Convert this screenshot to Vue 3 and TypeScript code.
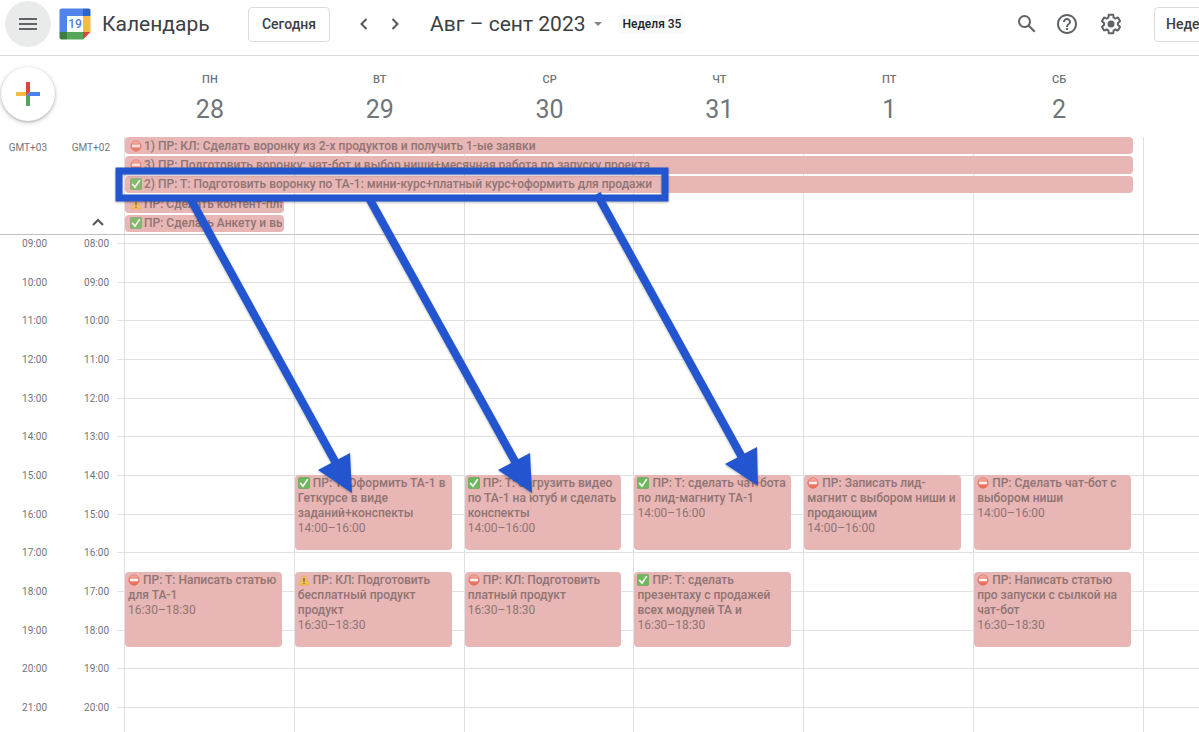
<script setup lang="ts">
type Mark = 'stop' | 'done' | 'warn'

interface AllDayEvent {
  mark: Mark
  title: string
  span: number
}

interface TimedEvent {
  mark: Mark
  title: string
  time: string
  day: number
  start: number
}

const days = [
  { name: 'ПН', date: 28 },
  { name: 'ВТ', date: 29 },
  { name: 'СР', date: 30 },
  { name: 'ЧТ', date: 31 },
  { name: 'ПТ', date: 1 },
  { name: 'СБ', date: 2 },
]

const allDay: AllDayEvent[] = [
  { mark: 'stop', title: '1) ПР: КЛ: Сделать воронку из 2-х продуктов и получить 1-ые заявки', span: 6 },
  { mark: 'stop', title: '3) ПР: Подготовить воронку: чат-бот и выбор ниши+месячная работа по запуску проекта', span: 6 },
  { mark: 'done', title: '2) ПР: Т: Подготовить воронку по ТА-1: мини-курс+платный курс+оформить для продажи', span: 6 },
  { mark: 'warn', title: 'ПР: Сделать контент-пла', span: 1 },
  { mark: 'done', title: 'ПР: Сделать Анкету и вы', span: 1 },
]

const firstHour = 8
const hours = Array.from({ length: 13 }, (_, i) => firstHour + i)
const clock = (h: number): string => `${String(h).padStart(2, '0')}:00`

const events: TimedEvent[] = [
  { mark: 'stop', title: 'ПР: Т: Написать статью\nдля ТА-1', time: '16:30–18:30', day: 0, start: 16.5 },
  { mark: 'done', title: 'ПР: Т: Оформить ТА-1 в\nГеткурсе в виде\nзаданий+конспекты', time: '14:00–16:00', day: 1, start: 14 },
  { mark: 'warn', title: 'ПР: КЛ: Подготовить\nбесплатный продукт\nпродукт', time: '16:30–18:30', day: 1, start: 16.5 },
  { mark: 'done', title: 'ПР: Т: Загрузить видео\nпо ТА-1 на ютуб и сделать\nконспекты', time: '14:00–16:00', day: 2, start: 14 },
  { mark: 'stop', title: 'ПР: КЛ: Подготовить\nплатный продукт', time: '16:30–18:30', day: 2, start: 16.5 },
  { mark: 'done', title: 'ПР: Т: сделать чат-бота\nпо лид-магниту ТА-1', time: '14:00–16:00', day: 3, start: 14 },
  { mark: 'done', title: 'ПР: Т: сделать\nпрезентаху с продажей\nвсех модулей ТА и', time: '16:30–18:30', day: 3, start: 16.5 },
  { mark: 'stop', title: 'ПР: Записать лид-\nмагнит с выбором ниши и\nпродающим', time: '14:00–16:00', day: 4, start: 14 },
  { mark: 'stop', title: 'ПР: Сделать чат-бот с\nвыбором ниши', time: '14:00–16:00', day: 5, start: 14 },
  { mark: 'stop', title: 'ПР: Написать статью\nпро запуски с сылкой на\nчат-бот', time: '16:30–18:30', day: 5, start: 16.5 },
]

// Two rows per hour; row 1 is the strip above the first hour line.
const rowOf = (hour: number): number => (hour - firstHour) * 2 + 2

const arrows = [
  { line: 'M190 198L337 465', head: '352,493 318,470 350,453' },
  { line: 'M369 198L517 465', head: '532,493 498,470 530,453' },
  { line: 'M597 194L743 459', head: '758,486 725,464 757,447' },
]
</script>

<template>
  <div class="page">
    <svg class="defs" width="0" height="0" aria-hidden="true">
      <defs>
        <linearGradient id="bar-shine" x1="0" y1="0" x2="0" y2="1">
          <stop offset="0" stop-color="#f4b9ae" />
          <stop offset="0.45" stop-color="#ea8272" />
          <stop offset="1" stop-color="#ea6a55" />
        </linearGradient>
      </defs>
      <symbol id="mark-stop" viewBox="0 0 12 12">
        <circle cx="6" cy="6" r="5.2" fill="url(#bar-shine)" stroke="#e5715f" stroke-width="0.8" />
        <rect x="2" y="4.8" width="8" height="2.4" rx="0.5" fill="#fbf0ef" />
      </symbol>
      <symbol id="mark-done" viewBox="0 0 12 12">
        <rect x="0.4" y="0.4" width="11.2" height="11.2" rx="1.4" fill="#6bb95c" stroke="#5a9f50" stroke-width="0.6" />
        <path d="M2.6 6.4L5 9.2L9.4 2.6" fill="none" stroke="#fff" stroke-width="1.7" stroke-linecap="round" />
      </symbol>
      <symbol id="mark-warn" viewBox="0 0 12 12">
        <path d="M6 1L11.4 11H0.6Z" fill="#f3c04f" stroke="#e9b04a" stroke-width="0.8" stroke-linejoin="round" />
        <path d="M6 4V7.8M6 8.8V10" stroke="#6f5340" stroke-width="1.2" />
      </symbol>
    </svg>

    <header class="topbar">
      <button class="menu" aria-label="Главное меню">
        <svg width="24" height="24" viewBox="0 0 24 24"><path d="M3 18h18v-2H3v2zm0-5h18v-2H3v2zm0-7v2h18V6H3z" fill="#5f6368" /></svg>
      </button>
      <a class="brand" href="#">
        <svg width="32" height="32" viewBox="0 0 32 32" aria-hidden="true">
          <path d="M2.5 0.5H24V8H8V24H0.5V2.5a2 2 0 0 1 2-2Z" fill="#5083ec" />
          <path d="M24 0.5h5.500a2 2 0 0 1 2 2V8H24Z" fill="#2f63c9" />
          <path d="M24 8h7.500v16H24Z" fill="#f2bd42" />
          <path d="M8 24h16v7.500H8Z" fill="#57a55a" />
          <path d="M0.500 24H8v7.500H2.500a2 2 0 0 1-2-2Z" fill="#3b7f40" />
          <path d="M24 24h7.500L24 31.500Z" fill="#dc4437" />
          <rect x="8" y="8" width="16" height="16" fill="#fff" />
          <text x="16" y="20" text-anchor="middle" class="logo-day">19</text>
        </svg>
        <span>Календарь</span>
      </a>
      <button class="outlined today">Сегодня</button>
      <button class="arrow" aria-label="Предыдущая неделя">
        <svg width="20" height="20" viewBox="0 0 20 20"><path d="M12.500 5L7.500 10L12.500 15" class="stroke" /></svg>
      </button>
      <button class="arrow" aria-label="Следующая неделя">
        <svg width="20" height="20" viewBox="0 0 20 20"><path d="M7.500 5L12.500 10L7.500 15" class="stroke" /></svg>
      </button>
      <button class="period">
        Авг – сент 2023
        <svg width="8" height="4" viewBox="0 0 8 4" aria-hidden="true"><path d="M0 0h8L4 4Z" fill="#80868b" /></svg>
      </button>
      <span class="week">Неделя 35</span>
      <div class="tools">
        <button class="tool" aria-label="Поиск">
          <svg width="24" height="24" viewBox="0 0 24 24"><path fill="#5f6368" d="M20.490 19l-5.730-5.730C15.530 12.200 16 10.910 16 9.500A6.500 6.500 0 1 0 9.500 16c1.410 0 2.700-.470 3.770-1.240L19 20.490 20.490 19zM5 9.500C5 7.010 7.010 5 9.500 5S14 7.010 14 9.500 11.990 14 9.500 14 5 11.990 5 9.500z" /></svg>
        </button>
        <button class="tool" aria-label="Справка">
          <svg width="24" height="24" viewBox="0 0 24 24"><path fill="#5f6368" d="M11 18h2v-2h-2v2zm1-16C6.480 2 2 6.480 2 12s4.480 10 10 10 10-4.480 10-10S17.520 2 12 2zm0 18c-4.410 0-8-3.590-8-8s3.590-8 8-8 8 3.590 8 8-3.590 8-8 8zm0-14c-2.210 0-4 1.790-4 4h2c0-1.100.900-2 2-2s2 .900 2 2c0 2-3 1.750-3 5h2c0-2.250 3-2.500 3-5 0-2.210-1.790-4-4-4z" /></svg>
        </button>
        <button class="tool settings" aria-label="Настройки">
          <svg width="24" height="24" viewBox="0 0 24 24">
            <path fill="#5f6368" d="M13.85 22.25h-3.7c-.74 0-1.36-.54-1.45-1.27l-.27-1.89c-.27-.14-.53-.29-.79-.46l-1.8.72c-.7.26-1.47-.03-1.81-.65L2.2 15.53c-.35-.66-.2-1.44.36-1.88l1.53-1.19c-.01-.15-.02-.3-.02-.46 0-.15.01-.31.02-.46l-1.52-1.19c-.59-.45-.74-1.26-.37-1.88l1.85-3.19c.34-.62 1.11-.9 1.79-.63l1.81.73c.26-.17.52-.32.78-.46l.27-1.91c.09-.7.71-1.25 1.44-1.25h3.7c.74 0 1.36.54 1.45 1.27l.27 1.89c.27.14.53.29.79.46l1.8-.72c.71-.26 1.48.03 1.82.65l1.84 3.18c.36.66.2 1.44-.36 1.88l-1.52 1.19c.01.15.02.3.02.46s-.01.31-.02.46l1.52 1.19c.56.45.72 1.23.37 1.86l-1.86 3.22c-.34.62-1.11.9-1.8.63l-1.8-.72c-.26.17-.52.32-.78.46l-.27 1.91c-.1.68-.72 1.22-1.46 1.22zm-3.23-2h2.76l.37-2.55.53-.22c.44-.18.88-.44 1.34-.78l.45-.34 2.38.96 1.38-2.4-2.03-1.58.07-.56c.03-.26.06-.51.06-.78s-.03-.53-.06-.78l-.07-.56 2.03-1.58-1.39-2.4-2.39.96-.45-.35c-.42-.32-.87-.58-1.33-.77l-.52-.22-.37-2.55h-2.76l-.37 2.55-.53.21c-.44.19-.88.44-1.34.79l-.45.33-2.38-.95-1.39 2.39 2.03 1.58-.07.56a7 7 0 0 0-.06.79c0 .26.02.53.06.78l.07.56-2.03 1.58 1.38 2.4 2.39-.96.45.35c.43.33.86.58 1.33.77l.53.22.38 2.55z" />
            <circle cx="12" cy="12" r="3.5" fill="#5f6368" />
          </svg>
        </button>
      </div>
      <div class="view"><button class="outlined">Неделя</button></div>
    </header>

    <main class="calendar">
      <section class="week-head">
        <div class="create-cell">
          <button class="create" aria-label="Создать">
            <svg width="24" height="24" viewBox="0 0 24 24">
              <path d="M10 0h4v10l-4 4Z" fill="#dc4437" />
              <path d="M0 10h10v4H0Z" fill="#f2bd42" />
              <path d="M14 10h10v4H10Z" fill="#4a80ee" />
              <path d="M10 14h4v10h-4Z" fill="#57a55a" />
            </svg>
          </button>
        </div>
        <div v-for="d in days" :key="d.name" class="day">
          <span class="day-name">{{ d.name }}</span>
          <span class="day-date">{{ d.date }}</span>
        </div>
      </section>

      <section class="all-day">
        <div class="zones">
          <span>GMT+03</span>
          <span>GMT+02</span>
          <button class="collapse" aria-label="Свернуть">
            <svg width="12" height="8" viewBox="0 0 12 8"><path d="M1 7L6 2L11 7" class="stroke" /></svg>
          </button>
        </div>
        <div class="all-day-grid">
          <i v-for="n in 7" :key="n" class="divider" :style="{ gridColumn: n }" />
          <div
            v-for="(e, i) in allDay"
            :key="i"
            class="chip"
            :style="{ gridColumn: `1 / span ${e.span}`, gridRow: i + 1 }"
          >
            <svg class="mark"><use :href="`#mark-${e.mark}`" /></svg>
            <span>{{ e.title }}</span>
          </div>
        </div>
      </section>

      <section class="schedule">
        <template v-for="h in hours" :key="h">
          <span class="hour" :style="{ gridColumn: 1, gridRow: rowOf(h) }">{{ clock(h + 1) }}</span>
          <span class="hour" :style="{ gridColumn: 2, gridRow: rowOf(h) }">{{ clock(h) }}</span>
          <i class="rule" :style="{ gridRow: rowOf(h) }" />
        </template>
        <i v-for="n in 7" :key="n" class="divider tall" :style="{ gridColumn: n + 3 }" />
        <article
          v-for="(e, i) in events"
          :key="i"
          class="event"
          :style="{ gridColumn: e.day + 4, gridRow: `${rowOf(e.start)} / span 4` }"
        >
          <svg class="mark"><use :href="`#mark-${e.mark}`" /></svg>
          <strong>{{ e.title }}</strong>
          <time>{{ e.time }}</time>
        </article>
      </section>
    </main>

    <svg class="notes" aria-hidden="true">
      <g>
        <rect x="119" y="171" width="546" height="27" fill="none" stroke="#2255cf" stroke-width="7" />
        <template v-for="a in arrows" :key="a.line">
          <path :d="a.line" stroke="#2255cf" stroke-width="8" />
          <polygon :points="a.head" fill="#2255cf" />
        </template>
      </g>
    </svg>
  </div>
</template>

<style>
body {
  margin: 0;
  background: #fff;
}
</style>

<style scoped>
.page {
  position: relative;
  display: flex;
  flex-direction: column;
  min-height: 100vh;
  overflow: hidden;
  background: #fff;
  color: #3c4043;
  font-family: Roboto, "Noto Sans", sans-serif;
}

.defs,
.notes {
  position: absolute;
  top: 0;
  left: 0;
}

.notes {
  width: 100%;
  height: 100%;
  pointer-events: none;
}

.notes g {
  filter: drop-shadow(0 1px 1px rgba(0, 0, 0, 0.3));
}

button {
  padding: 0;
  border: 0;
  background: none;
  color: inherit;
  font-family: inherit;
  cursor: pointer;
}

svg {
  display: block;
  flex: none;
}

.stroke {
  fill: none;
  stroke: #54585d;
  stroke-width: 2;
}

.topbar {
  display: flex;
  align-items: center;
  box-sizing: border-box;
  height: 56px;
  padding-bottom: 7px;
  border-bottom: 1px solid #dadce0;
}

.menu {
  display: grid;
  place-items: center;
  flex: none;
  width: 46px;
  height: 46px;
  margin-left: 5px;
  border-radius: 50%;
  background: #e9ebea;
}

.brand {
  display: flex;
  align-items: center;
  gap: 11px;
  width: 189px;
  margin-left: 8px;
  color: #3c4043;
  font-size: 21px;
  text-decoration: none;
  white-space: nowrap;
}

.logo-day {
  fill: #4a7de8;
  font-size: 12px;
  font-weight: 500;
}

.outlined {
  height: 35px;
  padding: 0 11px;
  border: 1px solid #dadce0;
  border-radius: 4px;
  font-size: 14px;
  font-weight: 500;
}

.today {
  width: 82px;
  margin-right: 18px;
}

.arrow {
  display: grid;
  place-items: center;
  width: 31px;
  height: 31px;
}

.period {
  display: flex;
  align-items: center;
  gap: 9px;
  margin-left: 20px;
  font-size: 21px;
  white-space: nowrap;
}

.week {
  margin-left: 16px;
  padding: 0 4px;
  border-radius: 4px;
  background: #f8f9fa;
  color: #202124;
  font-size: 12px;
  font-weight: 500;
  line-height: 19px;
  white-space: nowrap;
}

.tools {
  display: flex;
  gap: 16px;
  margin-left: auto;
}

.settings {
  margin-left: 4px;
}

.view {
  width: 45px;
  margin-left: 31px;
  overflow: hidden;
}

.calendar {
  display: flex;
  flex: 1;
  flex-direction: column;
}

.week-head {
  display: grid;
  grid-template-columns: 125px repeat(6, 1fr) 55px;
  height: 81px;
}

.create-cell {
  padding: 11px 1px;
}

.create {
  display: grid;
  place-items: center;
  width: 54px;
  height: 54px;
  border-radius: 50%;
  background: #fff;
  box-shadow: 0 1px 3px rgba(60, 64, 67, 0.4), 0 2px 6px rgba(60, 64, 67, 0.12);
}

.day {
  display: flex;
  flex-direction: column;
  align-items: center;
  color: #70757a;
}

.day-name {
  margin-top: 16px;
  font-size: 11px;
  font-weight: 500;
  line-height: 16px;
}

.day-date {
  margin-top: 7px;
  font-size: 25px;
  line-height: 30px;
}

.all-day {
  display: grid;
  grid-template-columns: 125px 1fr;
  height: 97px;
  border-bottom: 1px solid #c0c2c4;
}

.zones {
  display: grid;
  grid-template-columns: 47px 63px;
  grid-template-rows: 20px 1fr;
  justify-items: end;
  color: #70757a;
  font-size: 10px;
  line-height: 21px;
}

.collapse {
  grid-column: 2;
  align-self: end;
  padding: 0 6px 8px 0;
}

.all-day-grid {
  display: grid;
  grid-template-columns: repeat(6, 1fr) 55px;
  grid-template-rows: repeat(5, 1fr);
  row-gap: 2px;
  padding-bottom: 2px;
}

.divider {
  grid-row: 1 / -1;
  width: 1px;
  margin: 0 0 -2px -1px;
  background: #dfe1e5;
}

.chip {
  display: flex;
  align-items: center;
  gap: 2px;
  min-width: 0;
  margin-right: 11px;
  padding: 0 2px 0 5px;
  border-radius: 4px;
  background: #e7b6b5;
  color: #907473;
  font-size: 12px;
  font-weight: 500;
  line-height: 16px;
  white-space: nowrap;
}

.chip span {
  min-width: 0;
  overflow: hidden;
}

.mark {
  width: 12px;
  height: 12px;
}

.chip .mark {
  opacity: 0.8;
}

.schedule {
  display: grid;
  flex: 1;
  grid-template-columns: 47px 62px 16px repeat(6, 1fr) 55px;
  grid-template-rows: 8px repeat(24, minmax(0, 1fr)) 25px;
  min-height: 497px;
}

.hour {
  justify-self: end;
  align-self: start;
  height: 12px;
  margin-top: -5px;
  color: #70757a;
  font-size: 10px;
  line-height: 12px;
}

.rule {
  grid-column: 3 / -1;
  align-self: start;
  height: 1px;
  margin-left: 8px;
  background: #dfe1e5;
}

.divider.tall {
  margin-bottom: 0;
}

.event {
  margin: 0 13px 2px 0;
  padding: 1px 0 0 3px;
  overflow: hidden;
  border-radius: 4px;
  background: #e7b6b5;
  color: #907473;
  font-size: 12px;
  line-height: 15px;
  white-space: nowrap;
}

.event .mark {
  float: left;
  margin: 1px 3px 0 0;
}

.event strong {
  font-weight: 500;
  white-space: pre;
}

.event time {
  display: block;
}
</style>
